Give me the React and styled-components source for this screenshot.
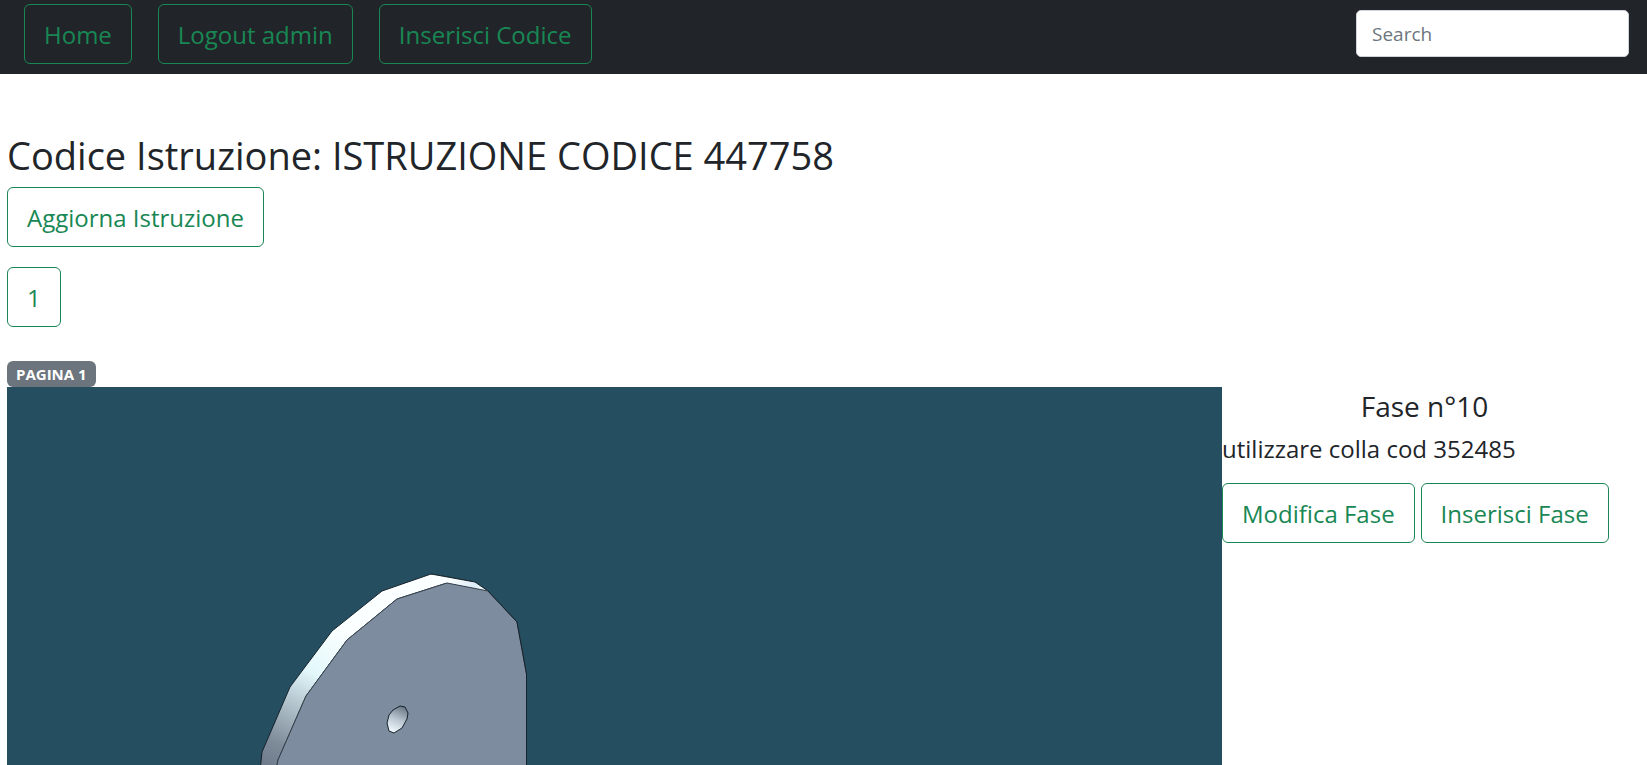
import React, { useState } from 'react';
import styled, { createGlobalStyle } from 'styled-components';

const GlobalStyle = createGlobalStyle`
  *, *::before, *::after {
    box-sizing: border-box;
  }

  body {
    margin: 0;
    background: #fff;
    color: #212529;
    font-family: 'Segoe UI', 'Open Sans', 'Noto Sans', sans-serif;
    font-size: 24px;
    line-height: 36px;
  }
`;

const Navbar = styled.nav`
  display: flex;
  align-items: flex-start;
  justify-content: space-between;
  padding: 4px 18px 10px 24px;
  background: #212529;
`;

const NavLinks = styled.div`
  display: flex;
  gap: 26px;
`;

const SearchForm = styled.form`
  padding-top: 6px;
`;

const SearchInput = styled.input`
  display: block;
  width: 273px;
  height: 47px;
  padding: 8px 15px;
  border: 1px solid #ced4da;
  border-radius: 5px;
  background: #fff;
  color: #212529;
  font-family: inherit;
  font-size: 19px;

  &::placeholder {
    color: #6c757d;
    opacity: 1;
  }
`;

const Button = styled.button`
  height: 60px;
  padding: 2px 19px 0;
  border: 1px solid #198754;
  border-radius: 6px;
  background: transparent;
  color: #198754;
  font-family: inherit;
  font-size: 24px;
  line-height: 36px;
  white-space: nowrap;
  cursor: pointer;
`;

const LinkButton = styled(Button).attrs({ as: 'a' })`
  display: inline-flex;
  align-items: center;
  text-decoration: none;
`;

const Content = styled.main`
  padding: 57px 20px 0 7px;
`;

const Title = styled.h1`
  margin: 0 0 8px;
  font-size: 38px;
  font-weight: 400;
  line-height: 48px;
`;

const ButtonRow = styled.div`
  display: flex;
  gap: ${props => props.$gap || 0}px;
  margin-bottom: ${props => props.$space || 0}px;
`;

const Badge = styled.span`
  display: block;
  width: fit-content;
  padding: 0 9px;
  border-radius: 6px;
  background: #6c757d;
  color: #fff;
  font-size: 15px;
  font-weight: 700;
  line-height: 26px;
`;

const Page = styled.section`
  display: grid;
  grid-template-columns: 3fr 1fr;
  align-items: start;
`;

const Drawing = styled.svg`
  display: block;
  width: 100%;
  background: #254e61;
`;

const PhaseTitle = styled.h4`
  margin: 0 0 8px;
  padding-top: 2px;
  font-size: 28px;
  font-weight: 400;
  line-height: 34px;
  text-align: center;
`;

const PhaseText = styled.p`
  margin: 0 0 16px;
`;

const PlateDrawing = () => (
  <Drawing viewBox="0 0 1215 378" role="img" aria-label="Piastra">
    <defs>
      <linearGradient id="edge" gradientUnits="userSpaceOnUse" x1="330" y1="240" x2="255" y2="385">
        <stop offset="0" stopColor="#fbffff" />
        <stop offset="0.32" stopColor="#e3f8fb" />
        <stop offset="0.5" stopColor="#bccdd5" />
        <stop offset="0.8" stopColor="#7e8c9a" />
        <stop offset="1" stopColor="#6b7787" />
      </linearGradient>
      <linearGradient id="tip" gradientUnits="userSpaceOnUse" x1="445" y1="190" x2="482" y2="204">
        <stop offset="0" stopColor="#fbffff" />
        <stop offset="0.6" stopColor="#dcecf5" />
        <stop offset="1" stopColor="#fbffff" />
      </linearGradient>
      <linearGradient id="hole" gradientUnits="userSpaceOnUse" x1="396" y1="320" x2="385" y2="345">
        <stop offset="0" stopColor="#6c7887" />
        <stop offset="0.5" stopColor="#b9c5d0" />
        <stop offset="1" stopColor="#f2fbff" />
      </linearGradient>
    </defs>
    <g stroke="#15232c" strokeWidth="1" strokeLinejoin="round">
      <path
        d="M253 384 L255 365 L283 300 L325 244 L375 204 L424 187 L468 195 L481 204 L440 196 L390 212 L340 253 L299 309 L271 373 L269 384 Z"
        fill="url(#edge)"
      />
      <path d="M424 187 L468 195 L481 204 L440 196 Z" fill="url(#tip)" stroke="none" />
      <path d="M424 187 L468 195 L481 204" fill="none" />
      <path
        d="M269 384 L271 373 L299 309 L340 253 L390 212 L440 196 L481 204 L510 235 L519.5 287 V384 Z"
        fill="#7e8c9f"
        stroke="#39444f"
      />
      <path d="M481 204 L510 235 L519.5 287 V384" fill="none" />
      <path
        d="M380 336 L382 328 L386 323 L393 319 L398 320 L401 326 L400 332 L395 341 L387 346 L382 344 Z"
        fill="url(#hole)"
      />
    </g>
  </Drawing>
);

const App = () => {
  const [search, setSearch] = useState('');

  return (
    <>
      <GlobalStyle />
      <Navbar>
        <NavLinks>
          <LinkButton href="#home">Home</LinkButton>
          <LinkButton href="#logout">Logout admin</LinkButton>
          <LinkButton href="#inserisci">Inserisci Codice</LinkButton>
        </NavLinks>
        <SearchForm role="search" onSubmit={e => e.preventDefault()}>
          <SearchInput
            type="search"
            placeholder="Search"
            aria-label="Search"
            value={search}
            onChange={e => setSearch(e.target.value)}
          />
        </SearchForm>
      </Navbar>

      <Content>
        <Title>Codice Istruzione: ISTRUZIONE CODICE 447758</Title>
        <ButtonRow $space={20}>
          <Button type="button">Aggiorna Istruzione</Button>
        </ButtonRow>
        <ButtonRow $space={34}>
          <Button type="button">1</Button>
        </ButtonRow>

        <Badge>PAGINA 1</Badge>
        <Page>
          <PlateDrawing />
          <div>
            <PhaseTitle>Fase n°10</PhaseTitle>
            <PhaseText>utilizzare colla cod 352485</PhaseText>
            <ButtonRow $gap={6}>
              <Button type="button">Modifica Fase</Button>
              <Button type="button">Inserisci Fase</Button>
            </ButtonRow>
          </div>
        </Page>
      </Content>
    </>
  );
};

export default App;
